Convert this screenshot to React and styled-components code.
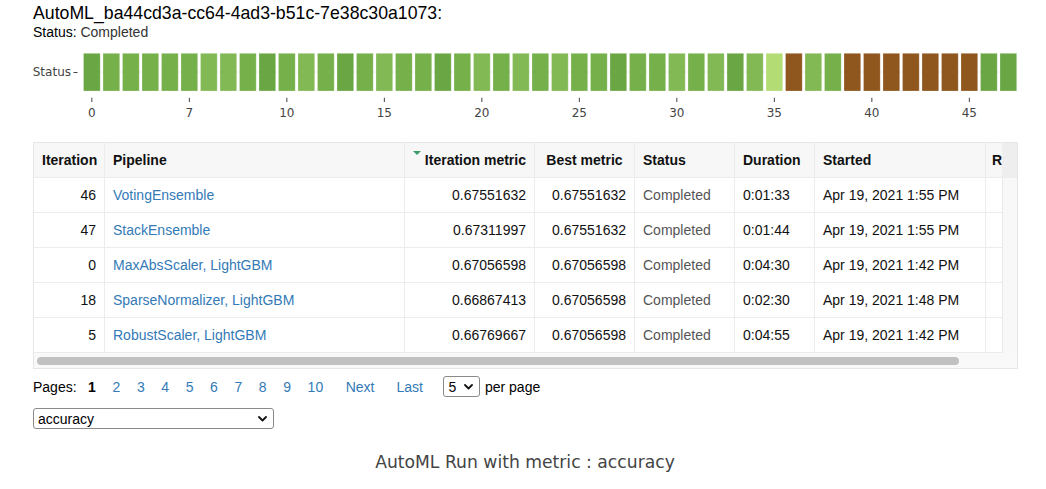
import React from "react";
import styled, { createGlobalStyle } from "styled-components";

const GlobalStyle = createGlobalStyle`
  html, body { margin: 0; padding: 0; background: #fff; }
  body { font-family: "Liberation Sans", Arial, sans-serif; color: #000; }
  * { box-sizing: border-box; }
`;

const Page = styled.div`
  width: 1046px;
  padding: 3px 0 0 33px;
`;

const Title = styled.h1`
  margin: 0;
  font-size: 17.7px;
  line-height: 20px;
  font-weight: normal;
  color: #000;
`;

const StatusLine = styled.div`
  margin-top: 1px;
  font-size: 14px;
  line-height: 17px;
  color: #000;
  span { color: #333; }
`;

const ChartSvg = styled.svg`
  display: block;
  margin-top: 1px;
`;

const Frame = styled.div`
  margin-top: 16px;
  width: 985px;
  border: 1px solid #e6e6e6;
  background: #f9f9f9;
`;

const Top = styled.div`
  display: flex;
`;

const Viewport = styled.div`
  width: 968px;
  overflow: hidden;
`;

const Gutter = styled.div`
  width: 15px;
  display: flex;
  flex-direction: column;
`;

const GutterHead = styled.div`
  height: 35px;
  background: #eeeeee;
`;

const GutterBody = styled.div`
  flex: 1;
  border-left: 1px solid #e8e8e8;
  background: #f8f8f8;
`;

const COLS = "71px 300px 130px 100px 100px 80px 171px 100px";

const Row = styled.div`
  display: grid;
  grid-template-columns: ${COLS};
  width: 1052px;
  height: 35px;
  border-bottom: 1px solid #ececec;
  background: ${(p) => (p.$head ? "#f7f7f7" : "#fff")};
`;

const Cell = styled.div`
  position: relative;
  display: flex;
  align-items: center;
  justify-content: ${(p) =>
    p.$align === "right" ? "flex-end" : p.$align === "center" ? "center" : "flex-start"};
  padding: 0 8px 1px ${(p) => (p.$tight ? 6 : 8)}px;
  border-right: 1px solid #ececec;
  font-size: 14px;
  white-space: nowrap;
  overflow: hidden;
  font-weight: ${(p) => (p.$head ? "bold" : "normal")};
  color: ${(p) => p.$color || "#111"};
`;

const PipelineLink = styled.a`
  color: #337ab7;
  text-decoration: none;
`;

const SortMark = styled.span`
  position: absolute;
  left: 8px;
  top: 8px;
  width: 0;
  height: 0;
  border-left: 4px solid transparent;
  border-right: 4px solid transparent;
  border-top: 4px solid #3f9d6a;
`;

const Track = styled.div`
  height: 15px;
  padding: 4px 0 0 3px;
`;

const Thumb = styled.div`
  width: 922px;
  height: 8px;
  border-radius: 4px;
  background: #c1c1c1;
`;

const Pager = styled.div`
  display: flex;
  align-items: center;
  margin-top: 7px;
  height: 21px;
  font-size: 14px;
  line-height: 16px;
`;

const PagerLabel = styled.span`
  color: #000;
`;

const PageItem = styled.a`
  margin-left: ${(p) => p.$gap}px;
  color: ${(p) => (p.$current ? "#000" : "#337ab7")};
  font-weight: ${(p) => (p.$current ? "bold" : "normal")};
  text-decoration: none;
`;

const SelectWrap = styled.span`
  position: relative;
  display: inline-block;
  margin-left: ${(p) => p.$gap || 0}px;
  width: ${(p) => p.$width}px;
  height: 21px;
`;

const Select = styled.select`
  appearance: none;
  -webkit-appearance: none;
  width: 100%;
  height: 21px;
  border: 1px solid #8a8a8a;
  border-radius: 3px;
  background: #fff;
  color: #000;
  font-family: "Liberation Sans", Arial, sans-serif;
  font-size: 14px;
  padding: 0 0 0 4px;
  margin: 0;
  outline: none;
`;

const Chevron = styled.svg`
  position: absolute;
  right: 7px;
  top: 8px;
  pointer-events: none;
`;

const PerPage = styled.span`
  margin-left: 4.5px;
  color: #000;
`;

const MetricRow = styled.div`
  margin-top: 11px;
  height: 21px;
`;

const Footer = styled.div`
  margin: 24px 0 0 -33px;
  width: 1050px;
  text-align: center;
  font-family: "DejaVu Sans", Verdana, sans-serif;
  font-size: 17.2px;
  line-height: 19px;
  color: #444;
`;

const D = "#6aa744";
const M = "#76b04b";
const L = "#82b955";
const VL = "#b4dc74";
const B = "#8f561e";

const barColors = [
  D, M, M, M, M, M, L, L, M, D,
  M, L, M, D, M, L, M, M, D, M,
  L, M, L, M, L, M, M, D, M, M,
  L, M, L, D, L, VL, B, L, M, B,
  B, B, B, B, B, B, D, D,
];

const tickIdx = [0, 5, 10, 15, 20, 25, 30, 35, 40, 45];
const tickLabel = ["0", "7", "10", "15", "20", "25", "30", "35", "40", "45"];

const rows = [
  ["46", "VotingEnsemble", "0.67551632", "0.67551632", "Completed", "0:01:33", "Apr 19, 2021 1:55 PM"],
  ["47", "StackEnsemble", "0.67311997", "0.67551632", "Completed", "0:01:44", "Apr 19, 2021 1:55 PM"],
  ["0", "MaxAbsScaler, LightGBM", "0.67056598", "0.67056598", "Completed", "0:04:30", "Apr 19, 2021 1:42 PM"],
  ["18", "SparseNormalizer, LightGBM", "0.66867413", "0.67056598", "Completed", "0:02:30", "Apr 19, 2021 1:48 PM"],
  ["5", "RobustScaler, LightGBM", "0.66769667", "0.67056598", "Completed", "0:04:55", "Apr 19, 2021 1:42 PM"],
];

const ChevronIcon = () => (
  <Chevron width="9" height="6" viewBox="0 0 9 6">
    <path d="M1 1 L4.5 4.5 L8 1" fill="none" stroke="#111" strokeWidth="1.8" strokeLinecap="round" strokeLinejoin="round" />
  </Chevron>
);

function StatusChart() {
  const font = "'DejaVu Sans', Verdana, sans-serif";
  return (
    <ChartSvg width="1013" height="84" viewBox="0 0 1013 84">
      <line x1="50" x2="985" y1="30" y2="30" stroke="#eeeeee" strokeWidth="1" />
      <text x="38" y="34.3" textAnchor="end" fontSize="12" fill="#444" fontFamily={font}>Status</text>
      <line x1="40.5" x2="44.5" y1="30.5" y2="30.5" stroke="#444" strokeWidth="1" />
      {barColors.map((c, i) => (
        <rect
          key={i}
          x={50.5 + 19.5 * i}
          y="11.3"
          width="16.7"
          height="37.7"
          fill={c}
          stroke="rgba(255,255,255,0.3)"
          strokeWidth="0.8"
        />
      ))}
      {tickIdx.map((idx, k) => {
        const x = 58.85 + 19.5 * idx;
        return (
          <g key={idx}>
            <line x1={x} x2={x} y1="55.7" y2="60" stroke="#444" strokeWidth="1" />
            <text x={x} y="75" textAnchor="middle" fontSize="12" fill="#444" fontFamily={font}>
              {tickLabel[k]}
            </text>
          </g>
        );
      })}
    </ChartSvg>
  );
}

export default function App() {
  const pages = ["2", "3", "4", "5", "6", "7", "8", "9", "10"];
  return (
    <Page>
      <GlobalStyle />
      <Title>AutoML_ba44cd3a-cc64-4ad3-b51c-7e38c30a1073:</Title>
      <StatusLine>
        Status: <span>Completed</span>
      </StatusLine>
      <StatusChart />
      <Frame>
        <Top>
          <Viewport>
            <Row $head>
              <Cell $head $align="left">Iteration</Cell>
              <Cell $head>Pipeline</Cell>
              <Cell $head $align="right">
                <SortMark />
                Iteration metric
              </Cell>
              <Cell $head $align="center">Best metric</Cell>
              <Cell $head>Status</Cell>
              <Cell $head>Duration</Cell>
              <Cell $head>Started</Cell>
              <Cell $head $tight>R</Cell>
            </Row>
            {rows.map((r) => (
              <Row key={r[0]}>
                <Cell $align="right">{r[0]}</Cell>
                <Cell>
                  <PipelineLink href="#">{r[1]}</PipelineLink>
                </Cell>
                <Cell $align="right">{r[2]}</Cell>
                <Cell $align="right">{r[3]}</Cell>
                <Cell $color="#555">{r[4]}</Cell>
                <Cell>{r[5]}</Cell>
                <Cell>{r[6]}</Cell>
                <Cell />
              </Row>
            ))}
          </Viewport>
          <Gutter>
            <GutterHead />
            <GutterBody />
          </Gutter>
        </Top>
        <Track>
          <Thumb />
        </Track>
      </Frame>
      <Pager>
        <PagerLabel>Pages:</PagerLabel>
        <PageItem $gap={11.5} $current>1</PageItem>
        {pages.map((p) => (
          <PageItem key={p} href="#" $gap={16.6}>{p}</PageItem>
        ))}
        <PageItem href="#" $gap={22.5}>Next</PageItem>
        <PageItem href="#" $gap={22}>Last</PageItem>
        <SelectWrap $gap={20.5} $width={37}>
          <Select defaultValue="5">
            <option value="5">5</option>
            <option value="10">10</option>
            <option value="25">25</option>
          </Select>
          <ChevronIcon />
        </SelectWrap>
        <PerPage>per page</PerPage>
      </Pager>
      <MetricRow>
        <SelectWrap $width={241}>
          <Select defaultValue="accuracy">
            <option value="accuracy">accuracy</option>
            <option value="AUC_weighted">AUC_weighted</option>
          </Select>
          <ChevronIcon />
        </SelectWrap>
      </MetricRow>
      <Footer>AutoML Run with metric : accuracy</Footer>
    </Page>
  );
}
